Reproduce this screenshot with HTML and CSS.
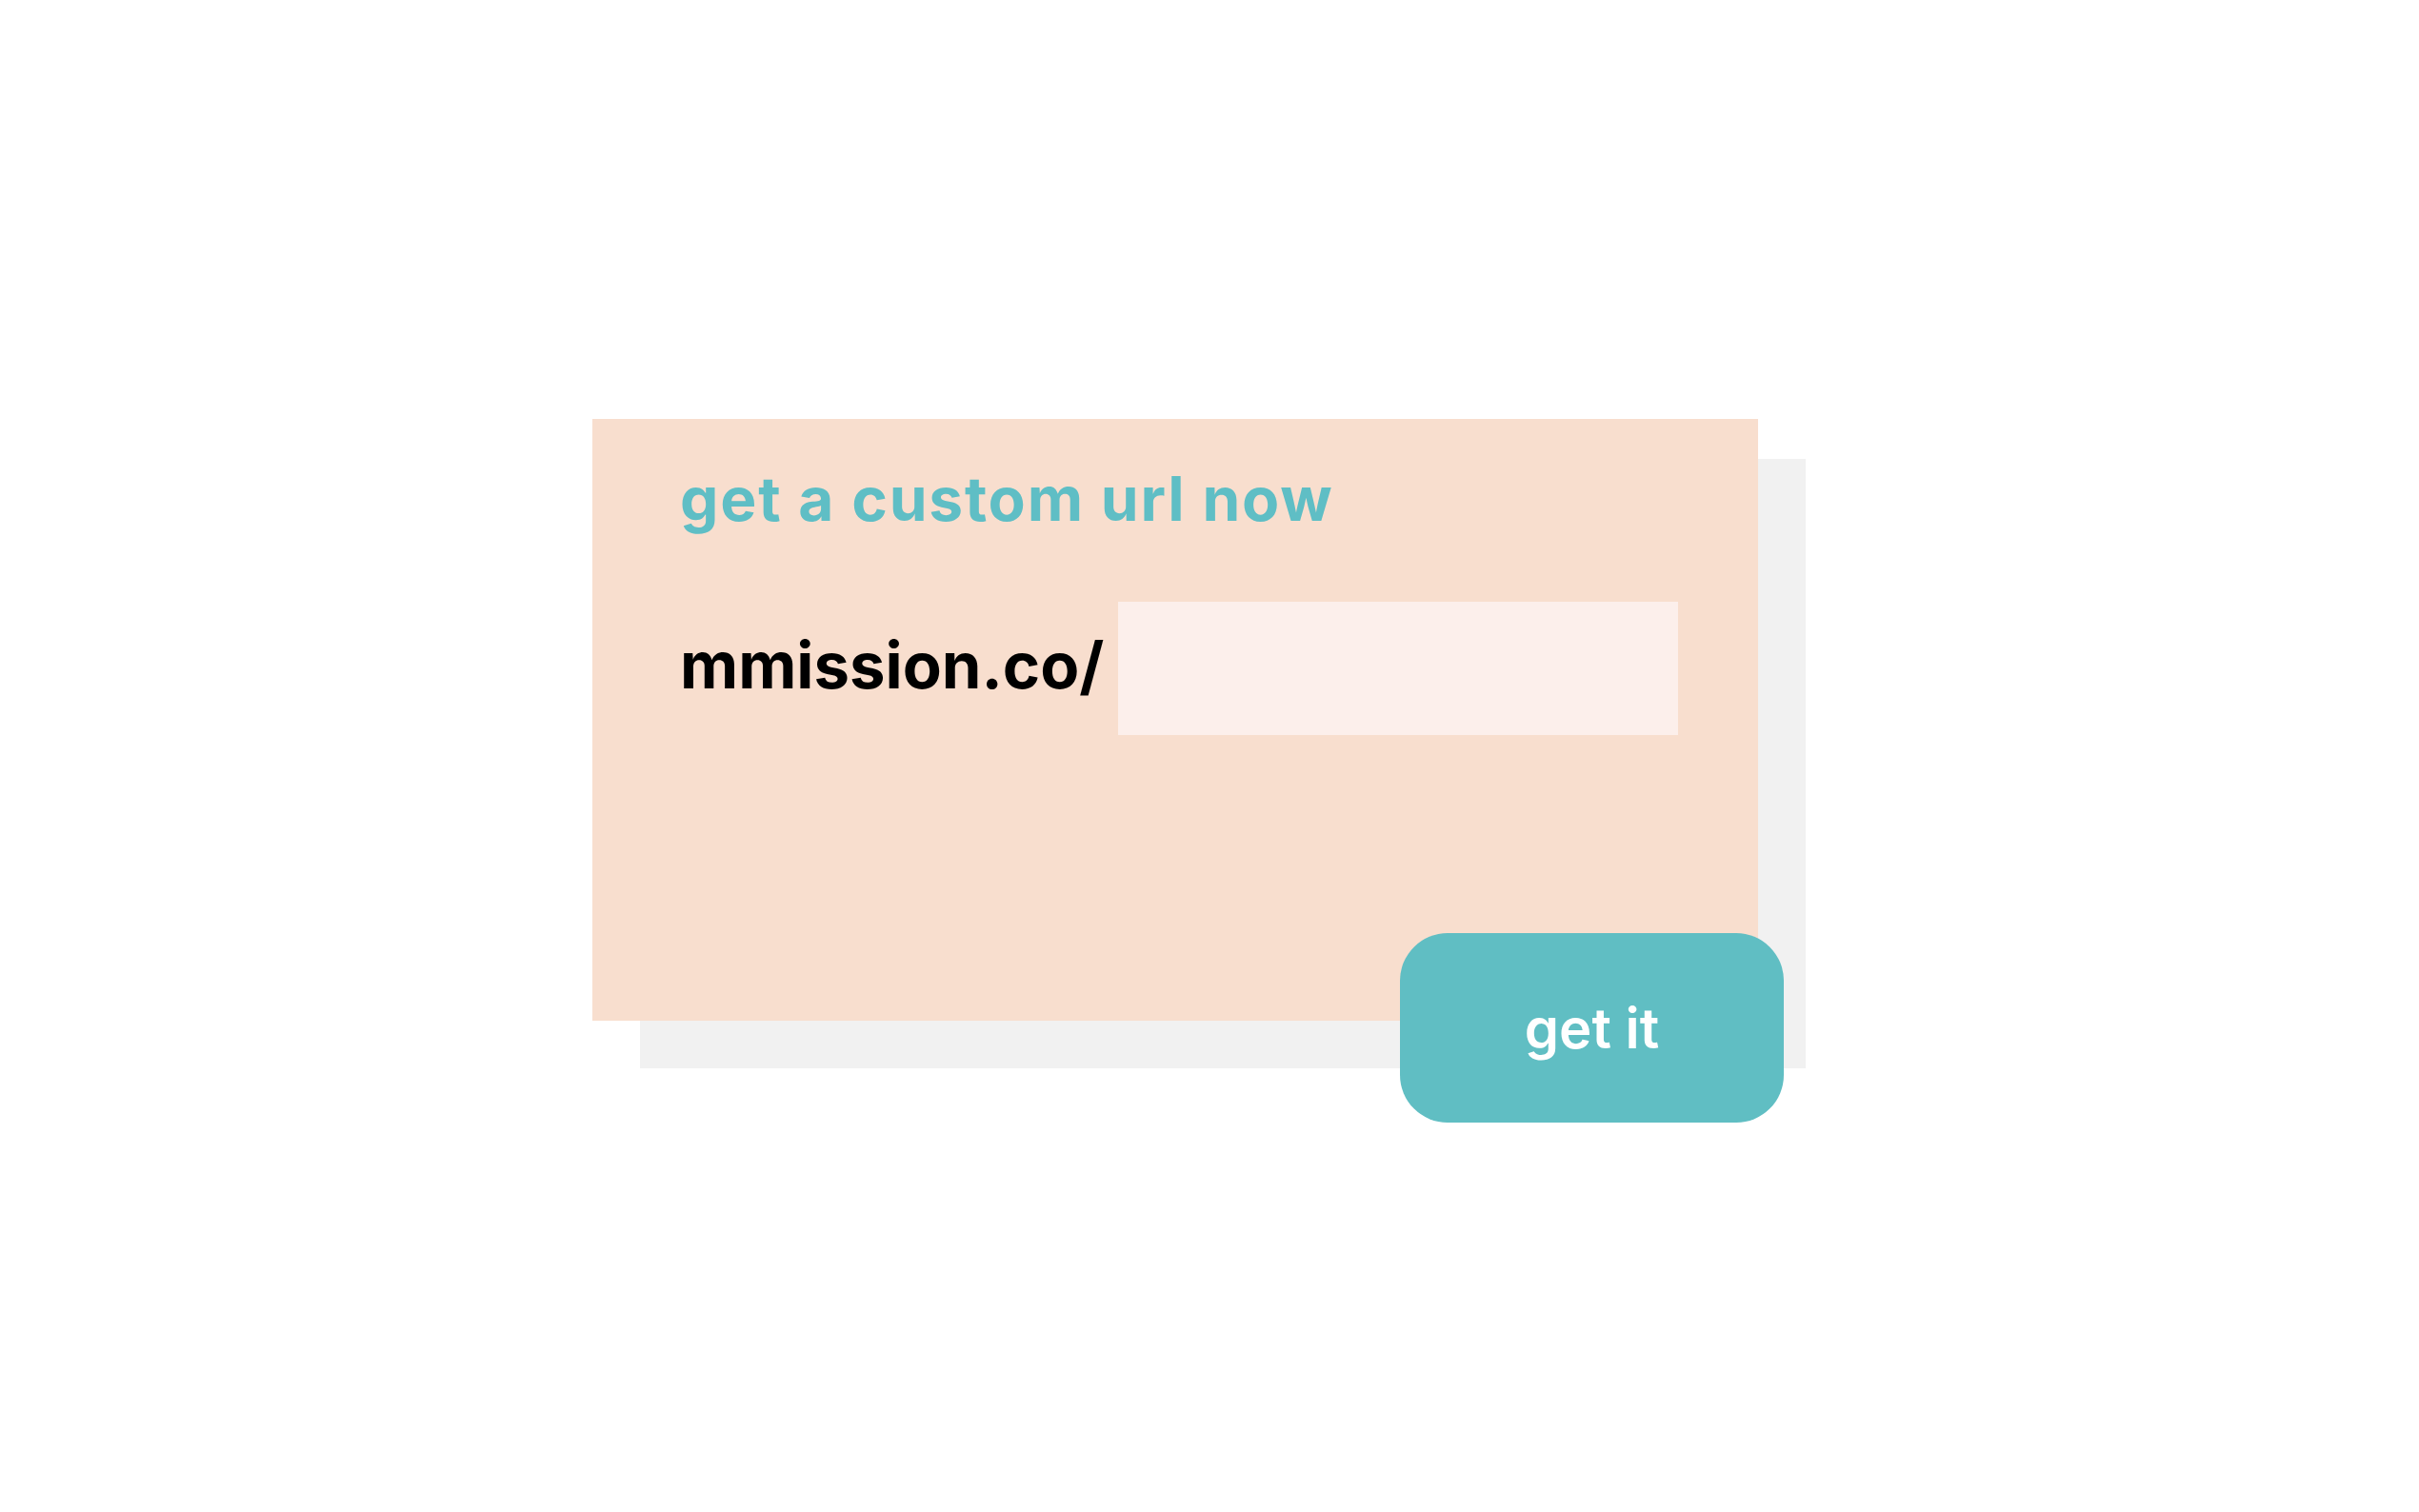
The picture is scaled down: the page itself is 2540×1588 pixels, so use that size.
FILE: index.html
```html
<!DOCTYPE html>
<html lang="en">
<head>
    <meta charset="UTF-8">
    <meta name="viewport" content="width=device-width, initial-scale=1.0">
    <title>Custom URL</title>
    <link rel="stylesheet" href="styles.css">
</head>
<body>
    <div class="stage">
        <div class="card">
            <h1>get a custom url now</h1>
            <div class="url-row">
                <span class="prefix">mmission.co/</span>
                <input type="text" id="slug" aria-label="custom url">
            </div>
            <button id="submit">get it</button>
        </div>
    </div>
</body>
</html>
```

FILE: styles.css
```css
html, body {
    min-height: 100vh;
}
body {
    font-family: Inter, "Noto Sans", sans-serif;
    background-color: #fff;
    margin: 0;
    padding: 0;
}
.stage {
    padding: 440px 0 0 622px;
}
.card {
    position: relative;
    box-sizing: border-box;
    width: 1224px;
    height: 632px;
    background: #f8dece;
    padding: 46px 84px 0 92px;
    display: flex;
    flex-direction: column;
}
.card::before {
    content: "";
    position: absolute;
    left: 50px;
    top: 42px;
    right: -50px;
    bottom: -50px;
    background: #f1f1f1;
    z-index: -1;
}
h1 {
    font-size: 64px;
    font-weight: 700;
    line-height: 1.2;
    color: #5fbec5;
    margin: 0;
    letter-spacing: 1.8px;
}
.url-row {
    display: flex;
    align-items: center;
    margin-top: 69px;
}
.prefix {
    font-size: 67px;
    font-weight: 700;
    line-height: 1.2;
    color: #000;
    position: relative;
    top: -3px;
}
input {
    box-sizing: border-box;
    width: 588px;
    height: 140px;
    margin-left: auto;
    border: none;
    background: #fcefeb;
    padding: 0 20px;
    font-family: inherit;
    font-size: 40px;
    outline: none;
}
button {
    margin-top: auto;
    align-self: flex-end;
    margin-right: -111px;
    margin-bottom: -107px;
    width: 403px;
    height: 199px;
    border: none;
    border-radius: 50px;
    background: #60bec3;
    color: #fff;
    font-family: inherit;
    font-size: 58px;
    font-weight: 600;
    cursor: pointer;
}
```
